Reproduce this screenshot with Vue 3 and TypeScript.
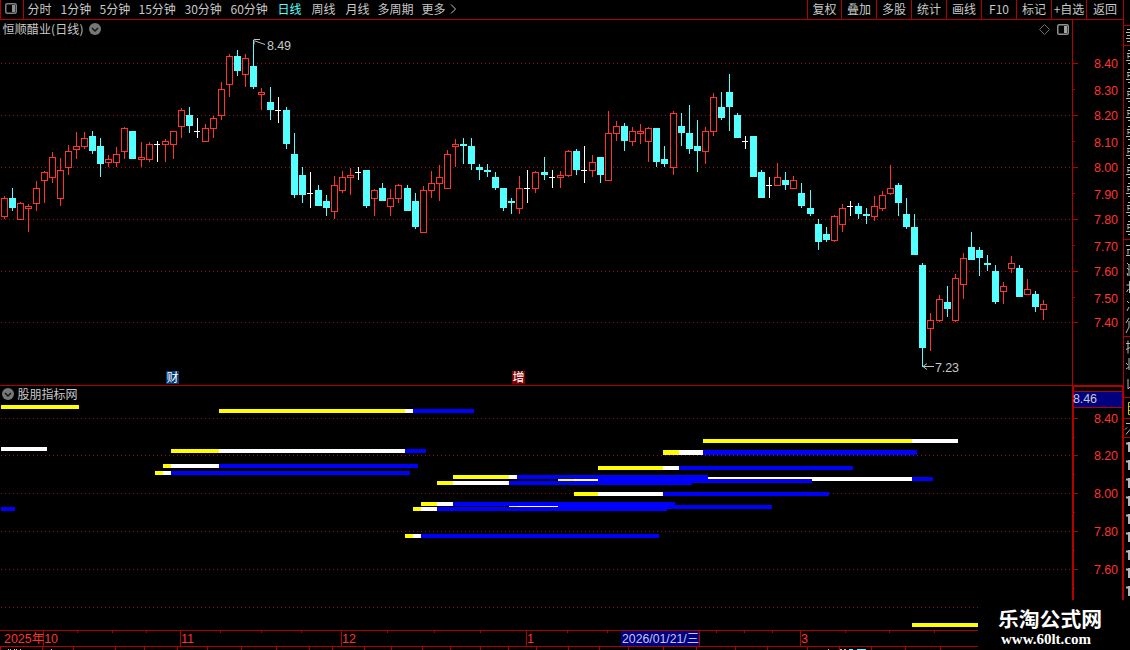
<script setup lang="ts">
type Kind = 'r' | 'c' | 'w'
interface Candle { x: number; high: number; top: number; bottom: number; low: number; kind: Kind }
interface Bar { x: number; y: number; w: number; h: number; color: string }

const periods = ['分时', '1分钟', '5分钟', '15分钟', '30分钟', '60分钟', '日线', '周线', '月线', '多周期', '更多']
const actions = ['复权', '叠加', '多股', '统计', '画线', 'F10', '标记', '+自选', '返回']

// Each entry: centre x, high, body top, body bottom, low, kind (r rising, c falling, w flat)
const series = `
4 196 198 217 219 r|12 188 198 208 211 c|20 202 203 220 220 r|28 204 206 209 232 r|36 181 188 204 211 r
44 171 172 181 203 r|52 152 157 178 183 r|60 158 170 199 206 r|68 145 151 168 175 r|76 132 146 150 159 r
84 132 138 147 149 r|92 131 136 151 154 c|100 138 146 164 177 c|108 155 159 163 167 r|116 147 154 163 167 r
124 127 128 152 159 r|132 131 131 159 159 c|141 142 157 160 167 r|149 142 144 160 162 r|157 141 144 145 162 w
165 139 141 145 162 r|173 131 131 145 159 r|181 108 110 127 138 r|189 107 115 126 133 c|197 118 131 132 138 w
205 124 128 142 142 r|213 116 118 129 138 r|221 82 89 116 120 r|229 54 56 85 97 r|237 50 56 71 76 c
245 54 58 75 87 r|253 40 66 87 89 c|261 88 92 95 110 r|270 87 102 110 120 c|278 97 110 111 123 w
286 107 110 144 149 c|294 133 154 195 198 c|302 167 175 195 203 c|310 172 193 194 208 w|318 185 190 206 206 c
326 195 201 208 216 c|334 176 185 212 219 r|342 171 177 191 193 r|350 168 175 178 195 r|358 167 172 173 180 w
366 170 170 206 208 c|374 189 190 199 216 r|382 183 188 201 201 c|390 189 198 207 216 r|398 184 185 199 203 r
407 185 188 211 211 c|415 193 201 227 229 c|423 186 190 233 233 r|431 171 183 191 198 r|439 165 177 184 201 r
447 150 154 189 189 r|455 139 144 147 167 r|463 138 144 146 164 c|471 138 146 164 170 c|479 164 167 170 180 c
487 164 170 172 177 c|495 172 177 188 190 c|503 188 188 208 211 c|511 198 201 203 214 c|519 176 188 209 214 r
527 170 188 189 203 w|535 171 172 189 193 r|544 157 172 175 180 c|552 170 177 178 188 w|560 171 175 178 188 r
568 150 151 176 177 r|576 149 151 170 175 c|584 146 170 171 183 w|592 155 162 171 177 r|600 157 157 175 183 c
608 111 133 181 181 r|616 121 126 134 141 r|624 123 126 141 151 c|632 127 131 142 146 r|640 124 131 134 144 r
648 127 128 142 162 r|656 128 128 162 167 c|664 146 159 164 167 c|673 111 113 168 175 r|681 113 126 133 146 c
689 105 133 149 154 c|697 120 146 151 172 c|705 127 131 152 164 r|713 93 97 132 136 r|721 92 107 118 120 c
729 74 92 107 131 c|737 113 115 138 138 c|745 136 141 142 149 w|753 136 136 177 177 c|761 170 172 198 198 c
769 177 185 186 198 w|777 163 177 186 186 r|785 172 180 185 190 c|793 176 180 189 189 r|801 183 193 206 208 c
810 190 208 214 216 c|818 219 224 242 250 c|826 227 234 240 242 c|834 215 216 241 242 r|842 204 208 225 232 r
850 201 206 207 216 w|858 203 206 214 219 c|866 208 214 216 224 c|874 196 206 217 221 r|882 191 195 209 211 r
890 165 188 194 195 r|898 183 185 203 216 c|906 198 214 227 229 c|914 214 227 255 255 c|922 263 265 348 367 c
930 313 320 329 351 r|939 295 299 321 322 r|947 286 302 309 317 c|955 274 278 321 322 r|963 253 258 285 299 r
971 232 247 260 260 c|979 247 250 258 276 c|987 255 263 265 271 c|995 265 271 302 304 c|1003 282 286 292 304 r
1011 256 263 269 273 r|1019 265 268 297 297 c|1027 279 289 295 295 r|1035 291 294 307 312 c|1043 300 304 310 320 r`

const candles: Candle[] = series.trim().split(/[|\n]/).map((row) => {
  const p = row.trim().split(' ')
  const [x, high, top, bottom, low] = p.slice(0, 5).map(Number)
  return { x, high, top, bottom, low, kind: p[5] as Kind }
})
const ink: Record<Kind, string> = { r: '#ff3232', c: '#54ffff', w: '#ffffff' }

const Y = '#ffff00'
const W = '#ffffff'
const B = '#0000ff'
// A horizontal run made of consecutive coloured segments
function run(y: number, start: number, parts: [number, string][], h = 4): Bar[] {
  let x = start
  return parts.map(([end, color]) => {
    const bar = { x, y, w: end - x, h, color }
    x = end
    return bar
  })
}
const bars: Bar[] = [
  ...run(405, 1, [[79, Y]]),
  ...run(447, 1, [[47, W]]),
  ...run(507, 1, [[15, B]]),
  ...run(409, 219, [[405, Y], [413, W], [474, B]]),
  ...run(449, 171, [[219, Y], [405, W], [426, B]]),
  ...run(464, 163, [[171, Y], [219, W], [418, B]]),
  ...run(471, 155, [[163, Y], [171, W], [410, B]]),
  ...run(477, 663, [[912, W], [933, B]]),
  ...run(479, 558, [[574, Y], [598, W], [812, B]]),
  ...run(475, 453, [[509, Y], [517, W], [708, B]]),
  ...run(481, 437, [[453, Y], [509, W], [692, B]]),
  ...run(492, 574, [[598, Y], [663, W], [829, B]]),
  ...run(466, 598, [[663, Y], [679, W], [853, B]]),
  ...run(450, 663, [[679, Y], [703, W], [917, B]], 5),
  ...run(439, 703, [[912, Y], [958, W]]),
  ...run(505, 509, [[517, Y], [558, W], [772, B]]),
  ...run(502, 421, [[437, Y], [453, W], [675, B]]),
  ...run(507, 413, [[421, Y], [437, W], [667, B]]),
  ...run(534, 405, [[413, Y], [421, W], [659, B]]),
  ...run(623, 912, [[978, Y]]),
]

const upperGrid = [63, 115, 167, 219, 271, 322]
const upperMinor = [89, 141, 193, 245, 297]
const lowerGrid = [418, 455, 493, 531, 569, 607]
const lowerMinor = [437, 474, 512, 550, 588]
const upperLabels: [string, number][] = [
  ['8.40', 68], ['8.30', 95], ['8.20', 120], ['8.10', 147], ['8.00', 172], ['7.90', 199],
  ['7.80', 224], ['7.70', 251], ['7.60', 276], ['7.50', 303], ['7.40', 327],
]
const lowerLabels: [string, number][] = [['8.40', 423], ['8.20', 460], ['8.00', 498], ['7.80', 536], ['7.60', 574]]

const monthLines = [43, 180, 341, 526, 800]
const weekTicks = [77, 112, 146, 220, 261, 301, 387, 434, 480, 567, 607, 716, 744, 772, 845, 889, 934]
const footTicks = [0, 42, 73, 115, 144, 177, 207, 241, 276, 309, 332, 364, 391, 422, 450, 480, 508, 536, 568, 599, 628, 663, 696, 735, 767, 807, 839, 871, 905, 940]
const sideLines = [25, 45, 239, 336, 397, 418, 437]
const sideOnes = [442, 460, 478, 496, 514, 532, 550, 568, 586]
</script>

<template>
  <div class="screen">
    <header class="toolbar">
      <div class="toggle">
        <svg width="12" height="11" viewBox="0 0 12 11">
          <rect x=".75" y=".75" width="10.5" height="9.5" rx="1.5" fill="none" stroke="#808080" stroke-width="1.5" />
          <rect x="7" y="2" width="3" height="7" fill="#909090" />
        </svg>
      </div>
      <nav class="periods">
        <span v-for="p in periods" :key="p" :class="{ active: p === '日线' }">{{ p }}</span>
        <svg class="more" width="7" height="11" viewBox="0 0 7 11"><path d="M1 .5 5.5 5 1 9.5" fill="none" stroke="#c0c0c0" /></svg>
      </nav>
      <div class="actions">
        <span v-for="a in actions" :key="a">{{ a }}</span>
      </div>
      <div class="corner"></div>
    </header>

    <svg class="chart" width="1130" height="630" viewBox="0 20 1130 630">
      <g shape-rendering="crispEdges">
        <path v-for="y in upperGrid" :key="'u' + y" class="grid" :d="`M1 ${y + 0.5}H1072`" />
        <path v-for="y in lowerGrid" :key="'l' + y" class="grid" :d="`M1 ${y + 0.5}H${y > 600 ? 978 : 1072}`" />

        <g v-for="k in candles" :key="k.x">
          <template v-if="k.kind === 'r'">
            <rect v-if="k.top > k.high" :x="k.x" :y="k.high" width="1" :height="k.top - k.high" :fill="ink.r" />
            <rect v-if="k.low > k.bottom" :x="k.x" :y="k.bottom" width="1" :height="k.low - k.bottom" :fill="ink.r" />
            <rect :x="k.x - 2.5" :y="k.top + 0.5" width="6" :height="k.bottom - k.top - 1" fill="#000" :stroke="ink.r" />
          </template>
          <template v-else>
            <rect :x="k.x" :y="k.high" width="1" :height="k.low - k.high" :fill="ink[k.kind]" />
            <rect :x="k.x - 3" :y="k.top" :width="k.kind === 'w' ? 6 : 7" :height="k.bottom - k.top" :fill="ink[k.kind]" />
          </template>
        </g>

        <rect v-for="(b, i) in bars" :key="'b' + i" :x="b.x" :y="b.y" :width="b.w" :height="b.h" :fill="b.color" />

        <g class="rule">
          <path d="M1072.5 20V385M0 385.5H1072M1123.5 20V385" />
          <path v-for="y in upperGrid" :key="'ut' + y" :d="`M1073 ${y + 0.5}h5`" />
          <path v-for="y in upperMinor" :key="'um' + y" :d="`M1073 ${y + 0.5}h2`" />
          <path v-for="y in lowerGrid.slice(0, 5)" :key="'lt' + y" :d="`M1074 ${y + 0.5}h4`" />
          <path v-for="y in lowerMinor" :key="'lm' + y" :d="`M1074 ${y + 0.5}h1`" />
          <path d="M1073 600V386H1123V600" stroke-width="2" />
        </g>
        <rect x="1074" y="392" width="48" height="15" fill="#000080" />
        <path class="rule" d="M1074 391.5h48M1074 407.5h48" />

        <rect x="621" y="631" width="78" height="15" fill="#000080" />
        <g class="rule">
          <path d="M0 630.5H978M0 646.5H978M699.5 631v15" />
          <path v-for="x in monthLines" :key="'m' + x" :d="`M${x + 0.5} 631v15`" />
          <path v-for="x in weekTicks" :key="'w' + x" :d="`M${x + 0.5} 631v2`" />
          <path v-for="x in footTicks" :key="'f' + x" :d="`M${x + 0.5} 647v3`" />
          <path v-for="y in sideLines" :key="'s' + y" :d="`M1124 ${y + 0.5}h6`" />
        </g>
        <path d="M8 649.5h1m1 0h1m3 0h1m1 0h1m3 0h1m30 0h1M828 649.5h1m11 0h2m2 0h2" stroke="#c0c0c0" />
        <path d="M849 649.5h4m4 0h9" stroke="#54ffff" />

        <rect x="166" y="371" width="13" height="13" fill="#003c78" />
        <rect x="512" y="371" width="13" height="13" fill="#800000" />
      </g>

      <!-- slice of the neighbouring quote panel -->
      <g class="sliver">
        <path d="M1127 29.5h3m-4 3h4m-3 3h3m-4 3h4m-3 3h3" />
        <path v-for="n in 10" :key="n" :d="`M1128 ${31.5 + n * 19}h2m-3 3h3m-2 3h2m-4 4h4m-2 3h2m-2 -9v4`" />
        <path d="M1126 245.5h4m-3 4h3m-2 0v5m-2 1h4M1127 263l2 2m-2 3l2 2m-2 3l1 3m1-12v12M1129.500 281v12m-3-8h4m-2 4l-2 3M1127 301l2 2m0 4l-2 4M1129 318l-3 5m3-2v6l-3 6M1126 343.500h4m-2-3v13m-2-4l4-2M1129 358v12m-3-7l2 2m-2 4l3-2M1128 379v10l2-2M1126 423.500h4m-3 4l-2 2m5 0l-4 5" />
        <path v-for="y in sideOnes" :key="y" :d="`M1126 ${y + 1.5}h4M1129 ${y}v10`" stroke-width="2" />
        <path d="M1130 402.500h-1.500v12H1130m-2-4h2m-2-4h2" stroke="#c8c800" />
      </g>

      <g fill="none" stroke="#c0c0c0">
        <path d="M265 44.500 255 41M260 39.500h-6v5M934 366.500h-11m4-3-4 3 4 3" />
      </g>
      <g transform="translate(1039 24)">
        <path d="M5.500 .5 10.500 5.500 5.500 10.500 .5 5.500Z" fill="none" stroke="#707070" />
        <rect x="18.750" y=".75" width="10.500" height="9.500" rx="1.500" fill="none" stroke="#909090" stroke-width="1.500" />
        <rect x="25" y="2" width="3" height="7" fill="#a0a0a0" />
      </g>
      <g fill="none">
        <circle cx="95" cy="29" r="6" fill="#777" /><path d="m92 28 3 3 3-3" stroke="#111" stroke-width="1.400" />
        <circle cx="8" cy="394" r="6" fill="#777" /><path d="m5 393 3 3 3-3" stroke="#111" stroke-width="1.400" />
      </g>

      <g class="cjk">
        <text x="2.500" y="33.500" textLength="81">恒顺醋业(日线)</text>
        <text x="17.500" y="398.500" textLength="60">股朋指标网</text>
        <text class="badge" x="166.500" y="382">财</text>
        <text class="badge" x="512.500" y="382">增</text>
      </g>
      <g class="num">
        <text x="267" y="50" textLength="24">8.49</text>
        <text x="935" y="372" textLength="24">7.23</text>
        <text x="1073" y="403" textLength="24">8.46</text>
      </g>
      <g class="num red">
        <text v-for="[t, y] in upperLabels" :key="t" x="1094" :y="y" textLength="24">{{ t }}</text>
        <text v-for="[t, y] in lowerLabels" :key="'b' + t" x="1094" :y="y" textLength="24">{{ t }}</text>
        <text x="4" y="643" textLength="54" lengthAdjust="spacingAndGlyphs">2025年10</text>
        <text x="181" y="643">11</text>
        <text x="342" y="643">12</text>
        <text x="527" y="643">1</text>
        <text x="801" y="643">3</text>
      </g>
      <text class="num date" x="622" y="642.500" textLength="77" lengthAdjust="spacingAndGlyphs">2026/01/21/三</text>

      <rect x="978" y="600" width="146" height="50" fill="#000" />
      <text class="brand" x="998" y="627" textLength="104" lengthAdjust="spacingAndGlyphs">乐淘公式网</text>
      <text class="site" x="1001" y="644" textLength="90" lengthAdjust="spacingAndGlyphs">www.60lt.com</text>
    </svg>
  </div>
</template>

<style>
body { background: #000; overflow: hidden; }
</style>

<style scoped>
.screen { display: flex; flex-direction: column; width: 1130px; height: 650px; overflow: hidden; background: #000; color: #c8c8c8; }
.toolbar { display: flex; height: 20px; flex: none; box-sizing: border-box; font: 12px/18px "Noto Sans CJK SC", sans-serif; }
.toggle { width: 24px; box-sizing: border-box; border: 1px solid #b40000; border-top: 0; display: flex; padding: 3px 0 0 4px; }
.toggle svg { display: block; }
.periods { flex: 1; display: grid; grid-template-columns: 33px 39px 39px 46px 46px 47px 34px 34px 32px 44px 28px 10px; padding-left: 3.5px; border-bottom: 1px solid #b40000; white-space: nowrap; }
.active { color: #54ffff; }
.more { display: block; margin-top: 3.5px; }
.actions { display: grid; grid-template-columns: 34px 35px 35px 35px 35px 35px 35px 35px 37px; border-bottom: 1px solid #b40000; text-align: center; white-space: nowrap; }
.actions span { border-left: 1px solid #b40000; }
.corner { width: 7px; box-sizing: border-box; border-left: 1px solid #b40000; }
.chart { display: block; flex: none; }
.grid { stroke: #a00c14; stroke-dasharray: 1 3; fill: none; }
.rule { stroke: #b40000; fill: none; }
.sliver { stroke: #b8b8b8; fill: none; }
.cjk { font: 12px "Noto Sans CJK SC", sans-serif; fill: #c8c8c8; }
.badge { fill: #fff; }
.num { font: 12.5px "Liberation Sans", "Noto Sans CJK SC", sans-serif; fill: #c8c8c8; }
.red { fill: #ff3232; }
.date { fill: #c8c8e8; font-size: 12px; }
.brand { font: bold 20px "Noto Sans CJK SC", sans-serif; fill: #fff; }
.site { font: bold 15px "Liberation Serif", serif; fill: #fff; }
</style>
